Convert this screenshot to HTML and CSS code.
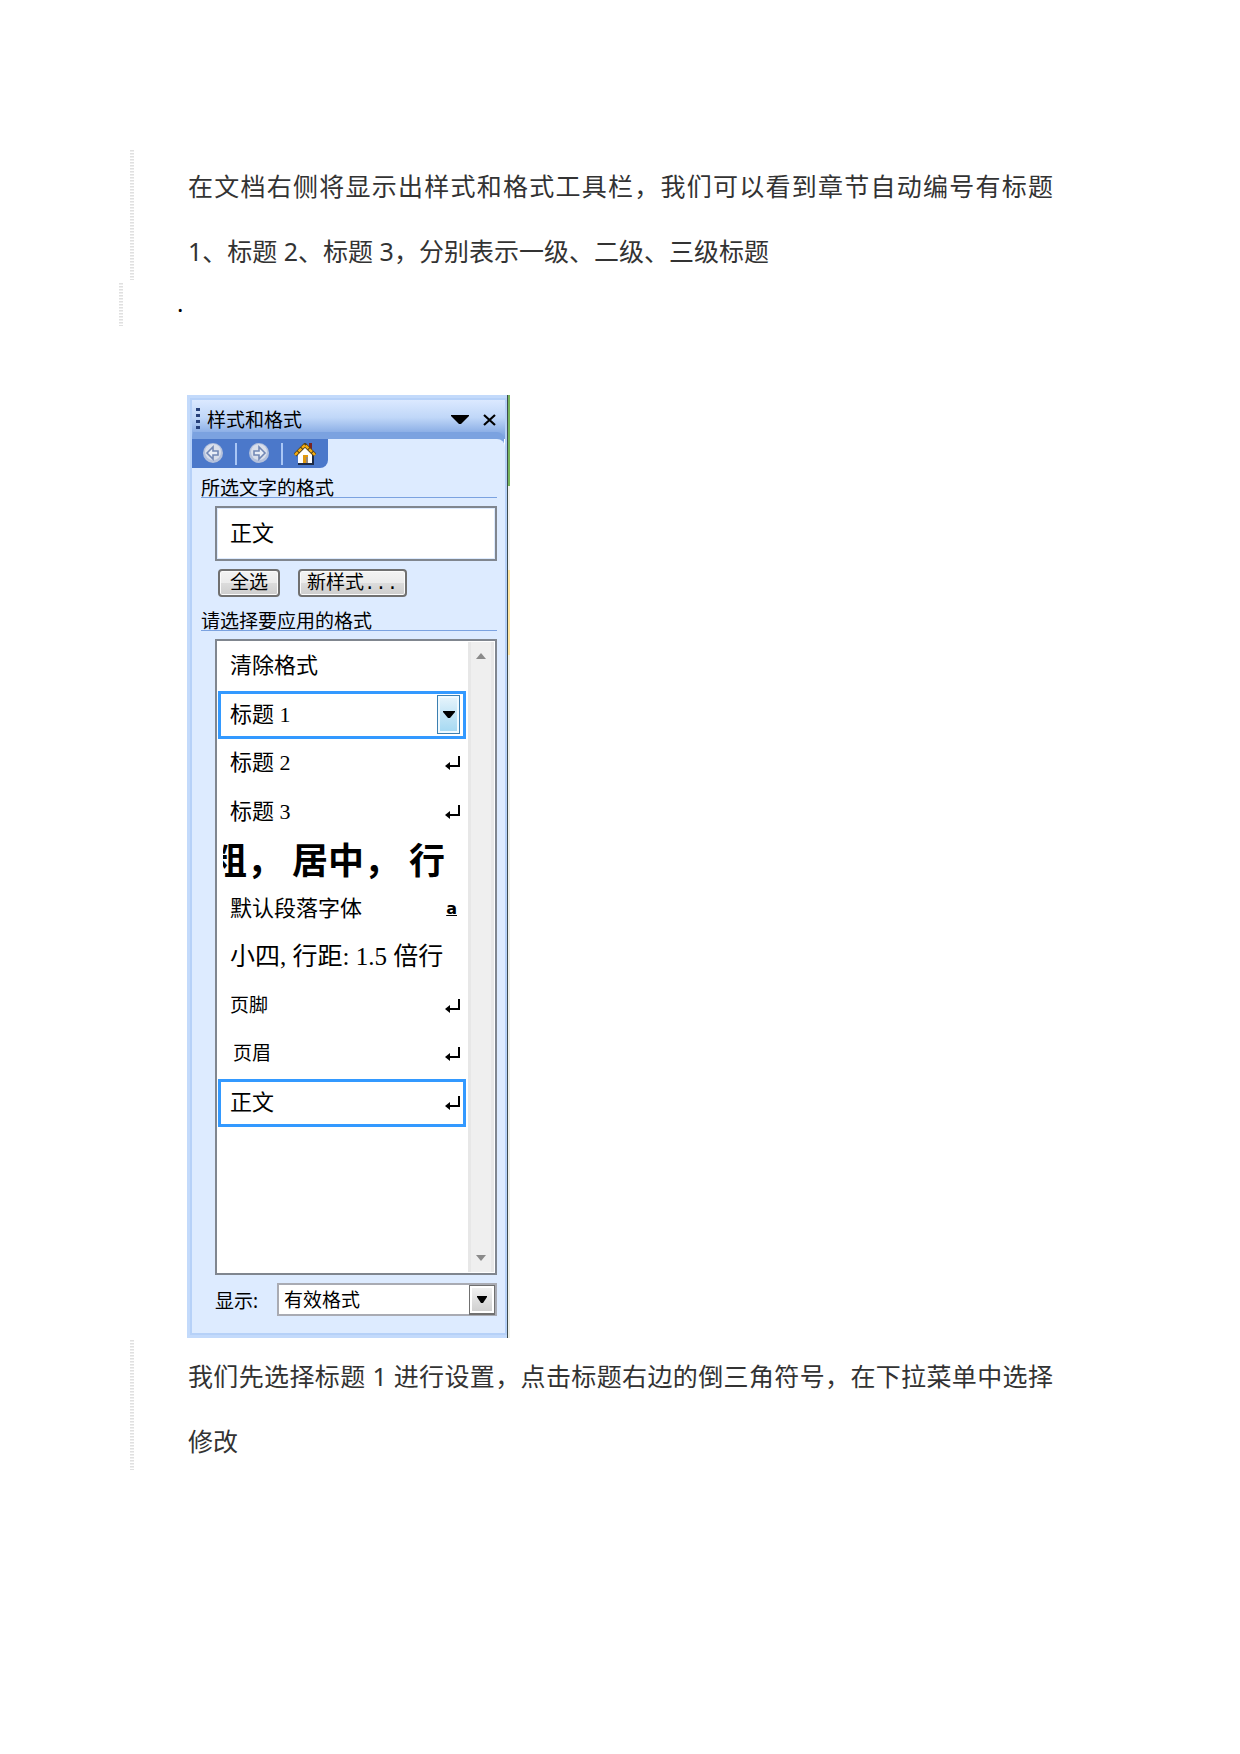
FILE: index.html
```html
<!DOCTYPE html>
<html lang="zh-CN">
<head>
<meta charset="utf-8">
<title>样式和格式</title>
<link rel="stylesheet" href="styles.css">
</head>
<body>
<main class="page">
  <p class="para"><span class="line full">在文档右侧将显示出样式和格式工具栏，我们可以看到章节自动编号有标题</span>
  <span class="line">1、标题 2、标题 3，分别表示一级、二级、三级标题</span></p>
  <p class="dot">.</p>

  <section class="shot" aria-label="样式和格式">
    <div class="pane">
      <header class="titlebar">
        <span class="grip"></span>
        <h1 class="title">样式和格式</h1>
        <button class="plain" aria-label="菜单"><svg width="18" height="10" viewBox="0 0 18 10"><path d="M0 0h18v1L10 9H8L0 1z"/></svg></button>
        <button class="plain" aria-label="关闭"><svg width="14" height="12" viewBox="0 0 14 12"><path d="M1 1l11 10M12 1L1 11" stroke="#000" stroke-width="2.2"/></svg></button>
      </header>
      <div class="body">
        <nav class="tools">
          <button class="plain" aria-label="后退"><svg width="22" height="22" viewBox="0 0 22 22"><circle cx="11" cy="10" r="10" fill="#b4c1dc"/><circle cx="11" cy="9" r="8" fill="#d9dfeb"/><path d="M5 10l6-6v4h5v4h-5v4z" fill="#e8edf6" stroke="#7288b5" stroke-width="1.6"/></svg></button>
          <span class="sep"></span>
          <button class="plain" aria-label="前进"><svg width="22" height="22" viewBox="0 0 22 22"><circle cx="11" cy="10" r="10" fill="#b4c1dc"/><circle cx="11" cy="9" r="8" fill="#d9dfeb"/><path d="M17 10l-6-6v4H6v4h5v4z" fill="#e8edf6" stroke="#7288b5" stroke-width="1.6"/></svg></button>
          <span class="sep"></span>
          <button class="plain" aria-label="主页"><svg width="22" height="22" viewBox="0 0 22 22"><path d="M15 0h3v8h-3z" fill="#7a2320"/><path d="M4 10l7-8 7 8v11H4z" fill="#fff"/><path d="M4 21h15V10" fill="none" stroke="#1d2a45" stroke-width="2"/><path d="M9 12h5v8H9z" fill="#e0980f"/><path d="M12 14h2v6h-2z" fill="#9a8a78"/><path d="M1 12L11 2l10 10" fill="none" stroke="#51421f" stroke-width="4"/><path d="M1 12L11 2l10 10" fill="none" stroke="#f5ab10" stroke-width="2.4" stroke-dasharray="4 1"/></svg></button>
        </nav>
        <label class="heading" for="current">所选文字的格式</label>
        <input class="current" id="current" value="正文" readonly>
        <div class="actions">
          <button class="btn">全选</button>
          <button class="btn wide">新样式...</button>
        </div>
        <h2 class="heading">请选择要应用的格式</h2>
        <div class="listbox">
          <ul class="styles">
            <li class="row">清除格式</li>
            <li class="row selected">标题 1<button class="drop" aria-label="标题 1 选项"><svg width="12" height="8" viewBox="0 0 12 8"><path d="M0 0h12v1L7 7H5L0 1z"/></svg></button></li>
            <li class="row">标题 2<svg class="mark" width="15" height="14" viewBox="0 0 15 14"><path d="M13 0h2v11H5v3L0 10l5-4v3h8z"/></svg></li>
            <li class="row">标题 3<svg class="mark" width="15" height="14" viewBox="0 0 15 14"><path d="M13 0h2v11H5v3L0 10l5-4v3h8z"/></svg></li>
            <li class="row big"><span class="clip">粗， 居中， 行</span></li>
            <li class="row">默认段落字体<span class="char">a</span></li>
            <li class="row medium">小四, 行距: 1.5 倍行</li>
            <li class="row small">页脚<svg class="mark" width="15" height="14" viewBox="0 0 15 14"><path d="M13 0h2v11H5v3L0 10l5-4v3h8z"/></svg></li>
            <li class="row small indent">页眉<svg class="mark" width="15" height="14" viewBox="0 0 15 14"><path d="M13 0h2v11H5v3L0 10l5-4v3h8z"/></svg></li>
            <li class="row selected">正文<svg class="mark" width="15" height="14" viewBox="0 0 15 14"><path d="M13 0h2v11H5v3L0 10l5-4v3h8z"/></svg></li>
          </ul>
          <div class="scroll">
            <svg width="10" height="6" viewBox="0 0 10 6"><path d="M5 0l5 6H0z" fill="#8a8a8a"/></svg>
            <svg width="10" height="6" viewBox="0 0 10 6"><path d="M0 0h10L5 6z" fill="#8a8a8a"/></svg>
          </div>
        </div>
        <div class="show">
          <label for="show">显示:</label>
          <div class="combo">
            <select id="show"><option>有效格式</option></select>
            <span class="arrow"><svg width="10" height="7" viewBox="0 0 10 7"><path d="M0 0h10v1L6 7H4L0 1z"/></svg></span>
          </div>
        </div>
      </div>
    </div>
    <div class="edge"></div>
  </section>

  <p class="para"><span class="line full">我们先选择标题 1 进行设置，点击标题右边的倒三角符号，在下拉菜单中选择</span>
  <span class="line">修改</span></p>
</main>
</body>
</html>
```
FILE: styles.css
```css
* { box-sizing: border-box; }
body {
  margin: 0;
  background: #fff;
  color: #000;
  font-family: "Noto Sans", "Noto Sans CJK SC", sans-serif;
}
button, input, select { font: inherit; color: inherit; border-radius: 0; }
.page { padding: 150px 187px; }

.para, .dot {
  --rule: repeating-linear-gradient(#e0e0e0 0 1px, #eee 1px 2px, #fff 2px 3px);
  background: var(--rule) no-repeat;
}
.para {
  margin: 0 0 0 -57px;
  padding: 4px 0 0 58px;
  height: 133px;
  background-size: 4px 130px;
  color: #333;
  font-size: 25px;
  line-height: 65px;
}
.line { display: block; white-space: nowrap; }
.full { text-align-last: justify; }
.dot {
  margin: 0 0 69px -68px;
  padding-left: 58px;
  height: 43px;
  background-size: 4px 43px;
  font-size: 24px;
  line-height: 40px;
}

.shot { display: flex; width: 323px; margin-bottom: 2px; }
.edge {
  flex: none;
  width: 3px;
  border-left: 1px solid #3c4a4e;
  background: linear-gradient(#76b35c 0 91px, #f2f2f0 91px 175px, #ffe5a0 175px 260px, #eef0ea 260px);
}
.pane {
  flex: 1;
  min-width: 0;
  border: 3px solid #c3dafb;
  border-right-width: 0;
  box-shadow: inset 0 0 0 2px #b6d1f8;
  padding: 2px;
  font-size: 19px;
}
.plain {
  display: flex;
  padding: 0;
  border: 0;
  background: none;
}
.titlebar {
  display: flex;
  align-items: center;
  height: 39px;
  padding: 0 8px 0 4px;
  background: linear-gradient(#dbe9ff, #c0d7f8 45%, #7ba2e0 95%);
}
.titlebar .plain + .plain { margin-left: 14px; }
.grip {
  width: 4px;
  height: 24px;
  margin-right: 7px;
  background: repeating-linear-gradient(#27417a 0 3px, transparent 3px 6px);
}
.title { flex: 1; margin: 0; font-size: 19px; line-height: 28px; font-weight: 400; }
.body {
  padding: 0 8px 17px 9px;
  border-top-right-radius: 8px;
  background: #ddebff;
  box-shadow: 0 -8px 0 -1px #7ba2e0;
}
.tools {
  display: flex;
  align-items: center;
  justify-content: space-between;
  width: 136px;
  height: 29px;
  margin-left: -9px;
  padding: 0 12px 0 10px;
  border-bottom-right-radius: 8px;
  background: #4b78ca;
}
.sep { width: 2px; height: 22px; background: #a9c6f5; }
.heading {
  display: block;
  height: 22px;
  margin: 8px 0;
  border-bottom: 1px solid #7ba2e0;
  font-size: 19px;
  font-weight: 400;
  line-height: 24px;
}
.current {
  display: block;
  width: calc(100% - 14px);
  height: 55px;
  margin-left: 14px;
  padding: 0 13px 5px;
  border: 2px solid #80868f;
  box-shadow: inset 0 0 0 1px #ddebff;
  font-size: 22px;
}
.actions { display: flex; gap: 18px; margin: 8px 0 12px 17px; }
.btn {
  width: 62px;
  height: 28px;
  padding: 2px 0 0;
  border: 2px solid #707070;
  border-radius: 4px;
  background: linear-gradient(#f3f3f3, #ebebeb 50%, #dcdcdc 50%, #cdcdcd);
  box-shadow: inset 0 0 0 1px #fbfbfb;
  font-family: "Liberation Mono", "Noto Sans CJK SC", monospace;
  line-height: 22px;
}
.wide { width: 109px; }
.listbox {
  display: flex;
  height: 636px;
  margin-left: 14px;
  padding: 1px;
  border: 2px solid #80868f;
  background: #fff;
}
.styles {
  flex: 1;
  min-width: 0;
  display: grid;
  grid-template-columns: minmax(0, 1fr);
  grid-template-rows: repeat(10, 1fr);
  height: 485px;
  margin: 0 2px 0 0;
  padding: 0;
  list-style: none;
}
.row {
  display: flex;
  align-items: center;
  justify-content: space-between;
  min-height: 0;
  padding: 0 3px 0 9px;
  border: 3px solid transparent;
  font-family: "Liberation Serif", "Noto Sans CJK SC", serif;
  font-size: 22px;
  line-height: 32px;
  white-space: pre;
}
.selected { border-color: #39f; }
.drop {
  display: flex;
  align-items: center;
  justify-content: center;
  width: 23px;
  height: 39px;
  padding: 0;
  border: 1px solid #3c7fb1;
  background: linear-gradient(#e8f5fc, #c4e5f6 50%, #a3d8f2);
  box-shadow: inset 0 0 0 2px #f0faff;
}
.big { padding: 4px 18px 0 2px; font-size: 36px; font-weight: 700; line-height: 42px; }
.clip { display: flex; flex: 1; min-width: 0; justify-content: flex-end; overflow: hidden; }
.medium { font-size: 25px; }
.small { font-size: 19px; }
.indent { padding-left: 12px; }
.char {
  padding-right: 3px;
  font: 700 16px/20px "DejaVu Sans", sans-serif;
  text-decoration: underline;
}
.scroll {
  flex: none;
  display: flex;
  flex-direction: column;
  align-items: center;
  justify-content: space-between;
  width: 26px;
  padding: 11px 0;
  border: solid #e7e7e7;
  border-width: 0 3px;
  background: #efefef;
}
.show {
  display: flex;
  align-items: center;
  justify-content: space-between;
  margin: 8px 0 0 14px;
}
.combo { position: relative; width: 220px; }
.combo select {
  display: block;
  width: 100%;
  height: 33px;
  padding: 0 5px;
  border: 2px solid #a9abb3;
  background: #fff;
  appearance: none;
}
.arrow {
  position: absolute;
  top: 2px;
  right: 2px;
  display: flex;
  align-items: center;
  justify-content: center;
  width: 26px;
  height: 30px;
  border: 1px solid #707070;
  border-bottom-width: 2px;
  background: linear-gradient(#f3f3f3, #cdcdcd);
  box-shadow: inset 0 0 0 2px #fff;
  pointer-events: none;
}
```
